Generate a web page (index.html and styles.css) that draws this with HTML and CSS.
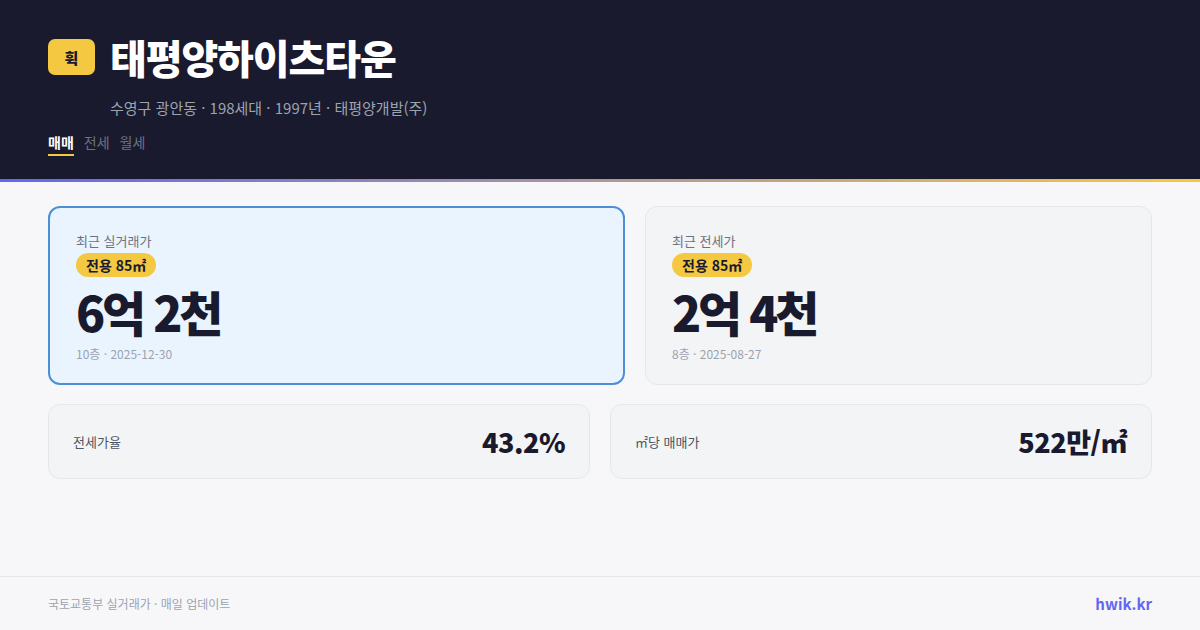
FILE: index.html
```html
<!DOCTYPE html>
<html lang="ko">
<head>
<meta charset="utf-8">
<link rel="stylesheet" href="styles.css">
</head>
<body>
<div class="page">
  <header class="hero">
    <div class="title-row">
      <span class="logo">휙</span>
      <h1 class="title">태평양하이츠타운</h1>
    </div>
    <p class="meta">수영구 광안동 · 198세대 · 1997년 · 태평양개발(주)</p>
    <nav class="tabs">
      <span class="tab active">매매</span>
      <span class="tab">전세</span>
      <span class="tab">월세</span>
    </nav>
  </header>
  <div class="accent"></div>
  <main class="content">
    <section class="price-row">
      <div class="card card-main">
        <div class="card-label">최근 실거래가</div>
        <span class="pill">전용 85㎡</span>
        <div class="price">6억 2천</div>
        <div class="sub">10층 · 2025-12-30</div>
      </div>
      <div class="card">
        <div class="card-label">최근 전세가</div>
        <span class="pill">전용 85㎡</span>
        <div class="price">2억 4천</div>
        <div class="sub">8층 · 2025-08-27</div>
      </div>
    </section>
    <section class="stat-row">
      <div class="stat">
        <span class="stat-label">전세가율</span>
        <span class="stat-value">43.2%</span>
      </div>
      <div class="stat">
        <span class="stat-label">㎡당 매매가</span>
        <span class="stat-value">522만/㎡</span>
      </div>
    </section>
  </main>
  <footer class="footer">
    <span class="source">국토교통부 실거래가 · 매일 업데이트</span>
    <span class="brand">hwik.kr</span>
  </footer>
</div>
</body>
</html>
```
FILE: styles.css
```css
* { box-sizing: border-box; margin: 0; padding: 0; }
html, body { width: 1200px; height: 630px; overflow: hidden; }
body {
  font-family: "Noto Sans CJK KR", "Noto Sans", sans-serif;
  background: #f7f7f9;
  color: #1a1a2e;
}
.page { display: flex; flex-direction: column; height: 630px; }
.hero {
  background: #1a1a2e;
  height: 179px;
  padding: 33px 48px 0;
}
.title-row { display: flex; align-items: center; gap: 15px; }
.logo {
  width: 47px; height: 36px;
  background: #f5c842;
  border-radius: 7px;
  display: flex; align-items: center; justify-content: center;
  font-size: 15px; font-weight: 900; color: #1a1a2e;
}
.title {
  font-size: 40px; font-weight: 900; color: #ffffff;
  letter-spacing: -1.1px; line-height: 48px;
}
.meta {
  margin: 16px 0 0 62px;
  font-size: 15px; color: #9ca3af; line-height: 22px;
}
.tabs { display: flex; gap: 10px; margin-top: 13px; }
.tab {
  font-size: 14px; color: #6b7280; line-height: 20px;
  padding-bottom: 2px;
}
.tab.active {
  color: #ffffff; font-weight: 700;
  border-bottom: 2px solid #f5c842;
}
.accent {
  height: 3px;
  background: linear-gradient(90deg, #6366f1, #f5c842);
}
.content { flex: 1; padding: 24px 48px 0; }
.price-row {
  display: grid;
  grid-template-columns: 577fr 507fr;
  gap: 20px;
}
.card {
  height: 179px;
  border: 1px solid #e5e7eb;
  background: #f3f4f6;
  border-radius: 12px;
  padding: 24px 26px 0;
  display: flex; flex-direction: column; align-items: flex-start;
}
.card-main {
  border: 2px solid #4a90d9;
  background: #eaf4ff;
  padding: 23px 26px 0;
}
.card-label { font-size: 13px; color: #6b7280; line-height: 20px; }
.pill {
  margin-top: 2px;
  background: #f5c842;
  border-radius: 12px;
  padding: 0 10px;
  font-size: 14px; font-weight: 700; line-height: 24px;
  color: #1a1a2e;
}
.price {
  margin-top: 3px;
  font-size: 48px; font-weight: 900; line-height: 62px;
  letter-spacing: -3.2px; color: #1a1a2e;
}
.sub { font-size: 12px; color: #9ca3af; line-height: 18px; margin-top: 3px; }
.stat-row {
  display: grid;
  grid-template-columns: 1fr 1fr;
  gap: 20px;
  margin-top: 19px;
}
.stat {
  height: 75px;
  border: 1px solid #e5e7eb;
  background: #f3f4f6;
  border-radius: 12px;
  padding: 0 24px;
  display: flex; align-items: center; justify-content: space-between;
}
.stat-label { font-size: 13px; color: #4b5563; }
.stat-value { font-size: 27px; font-weight: 900; color: #1a1a2e; letter-spacing: -0.5px; }
.footer {
  height: 54px;
  border-top: 1px solid #e5e7eb;
  padding: 0 48px;
  display: flex; align-items: center; justify-content: space-between;
}
.source { font-size: 12px; color: #9ca3af; }
.brand { font-size: 15px; font-weight: 700; color: #6366f1; }
```
